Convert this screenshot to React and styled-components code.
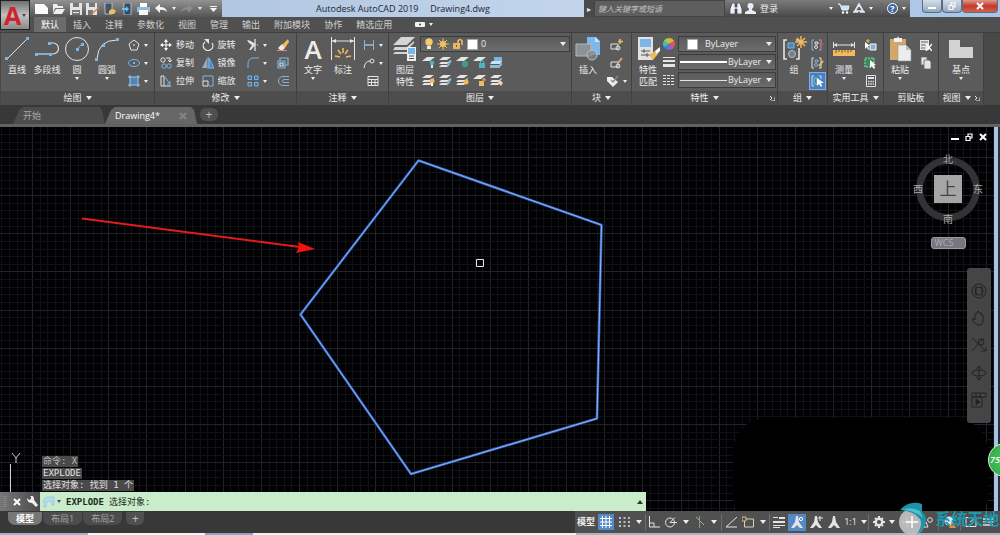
import React from "react";
import styled, { createGlobalStyle, css } from "styled-components";

const ui = `"Open Sans", "Noto Sans CJK SC", sans-serif`;
const mono = `"DejaVu Sans Mono", "Noto Sans CJK SC", monospace`;

const GlobalStyle = createGlobalStyle`
	* {
		box-sizing: border-box;
	}
	body {
		margin: 0;
		background: #2b2b2b;
		font: 9px/12px ${ui};
		color: #ececec;
		overflow: hidden;
	}
	button, input, select {
		font: inherit;
		color: inherit;
		margin: 0;
		padding: 0;
		border: 0;
		background: none;
	}
	svg {
		display: block;
		flex: none;
	}
`;

const W = "#e4e4e4";
const B = "#7db6e4";
const Y = "#f2b95f";
const T = "#4fb3bd";

const sheets = (
	<g fill={W}>
		<path d="M4 1h8l-4 3H0z" />
		<path d="M2 6h7l3-2v1L8 8H0zM2 9h6l3-2v1l-3 3H0z" />
	</g>
);
const sheet = <path d="M5 1h8L8 5H0z" fill={W} />;
const surveyor = (
	<path d="M6 0h2l1 6 4 6h-3L7 9l-3 3H1l4-6z" fill={W} />
);

// [width, height, drawing]
const glyphs = {
	caret: [6, 4, <path d="M0 0h6L3 4z" fill="#eee" />],
	smallCaret: [4, 3, <path d="M0 0h4L2 3z" fill="#eee" />],
	launcher: [5, 5, <path d="M0 0l2 2-2 2M5 1v4H1" fill="none" stroke={W} />],
	new: [13, 12, <path d="M0 1h9l4 4v6H0z" fill="#fafafa" />],
	open: [13, 12, <g fill="#eee"><path d="M1 1h4l1 2h5v2H3L1 10z" /><path d="M4 6h9l-3 5H1z" /></g>],
	save: [12, 12, <g><path d="M0 0h12v12H0z" fill="#e4e4e4" /><path d="M3 0h6v4H3zM2 7h8v5H2z" fill="#777" /><path d="M3 9h6v1H3z" fill="#eee" /></g>],
	saveAs: [13, 12, <g><path d="M0 0h11v12H0z" fill="#e4e4e4" /><path d="M3 0h6v4H3zM2 7h5v5H2z" fill="#777" /><path d="M12 4L6 10l-1 2 2-1 6-6z" fill="#d98a45" /></g>],
	openWeb: [12, 12, <g><path d="M1 0h7v11H1z" fill="#41546a" stroke="#eee" strokeWidth=".6" /><path d="M5 8q3-4 7 0l-2 3H5z" fill={Y} /></g>],
	saveWeb: [12, 12, <g><path d="M3 0h7v12H3z" fill="#2f4d6b" stroke="#eee" strokeWidth=".6" /><path d="M1 5h4V3l3 3-3 3V7H1z" fill="#6cc3ee" /></g>],
	print: [13, 12, <g><path d="M3 0h7v4H3z" fill="#fff" /><path d="M0 4h13v5H0z" fill="#8fbbe0" /><path d="M2 7h9v5H2z" fill="#f5f5f5" /></g>],
	undo: [12, 9, <path d="M0 4l5-4v3q6 0 7 5-3-3-7-2v3z" fill="#f5f5f5" />],
	redo: [12, 9, <path d="M12 4L7 0v3Q1 3 0 8q3-3 7-2v3z" fill="#8b8b8b" />],
	more: [7, 6, <path d="M0 0h7v1H0zM0 2h7L3.500 6z" fill="#f5f5f5" />],
	binoculars: [12, 11, <g fill="#eef"><path d="M2 0h3v4h2V0h3l2 6v5H7V6H5v5H0V6z" stroke="#333" strokeWidth=".7" /></g>],
	user: [11, 11, <g fill="#e8eef5"><circle cx="5.500" cy="3" r="3" /><path d="M4 5h3v2l4 2v2H0V9l4-2z" /></g>],
	cart: [12, 11, <g><path d="M0 1h2l2 6h6l1-4H3" fill="#cfe0f2" stroke="#e8eef5" /><circle cx="5" cy="9.500" r="1.200" fill="#fff" /><circle cx="9" cy="9.500" r="1.200" fill="#fff" /></g>],
	exchange: [12, 11, <path d="M6 1L2 8h8zM0 9h5M7 9h5M6 1v3" fill="none" stroke="#dfe9f5" strokeWidth="1.600" />],
	help: [11, 11, <g><circle cx="5.500" cy="5.500" r="5" fill="#3d67a5" stroke="#fff" /><text x="5.500" y="9" fontSize="9" fontWeight="700" textAnchor="middle" fill="#fff">?</text></g>],
	camera: [11, 7, <g><rect y="1" width="10" height="5" rx="1" fill="#f2f2f2" /><circle cx="5" cy="3.500" r="1" fill="#444" /></g>],

	line: [26, 26, <g><path d="M3 23L23 3" stroke={W} /><path d="M1 21h3v3H1zM22 1h3v3h-3z" fill={B} /></g>],
	polyline: [26, 26, <g fill="none"><path d="M2 18h17a5 5 0 0 0 0-11h-2" stroke={W} strokeWidth="1.200" /><path d="M2 18h14" stroke={B} /><path d="M1 17h3v3H1zM15 17h3v3h-3zM14 6h3v3h-3z" fill={B} /></g>],
	circle: [26, 26, <g><circle cx="13" cy="13" r="11.500" fill="none" stroke={W} /><path d="M13 13l5-5" stroke={B} /><path d="M12 12h3v3h-3zM17 7h3v3h-3z" fill={B} /></g>],
	arc: [26, 26, <g><path d="M3 23Q4 4 23 4" fill="none" stroke={W} /><path d="M1 22h3v3H1zM8 8h3v3H8zM22 2h3v3h-3z" fill={B} /></g>],
	polygon: [12, 12, <g fill="none" stroke={W}><path d="M6 1l5 4-2 6H3L1 5z" /><path d="M6 5v2" stroke={B} strokeWidth="2" /></g>],
	ellipse: [12, 12, <g fill="none" stroke={B}><ellipse cx="6" cy="6" rx="5.500" ry="3.500" /><path d="M5 6h2" strokeWidth="2" /></g>],
	hatch: [12, 12, <g><path d="M2 2h8v8H2z" fill="#4c86ba" /><path d="M2 0v12M10 0v12M0 2h12M0 10h12" stroke="#9fc9ea" /></g>],
	move: [12, 12, <g><path d="M6 2v8M2 6h8" stroke="#fff" /><path d="M6 0l2 3H4zM6 12l2-3H4zM0 6l3-2v4zM12 6L9 4v4z" fill="#fff" /></g>],
	rotate: [12, 12, <g><path d="M3 3a4.800 4.800 0 1 0 7 1" fill="none" stroke={W} strokeWidth="1.300" /><path d="M2 0h5v5z" fill={W} /></g>],
	trim: [12, 12, <g><path d="M1 2l7 3M8 0v12" stroke={W} strokeWidth="1.300" /><path d="M0 1l4 1 4 4-4 5H2l3-5-3-2z" fill={W} /><path d="M8 6h4" stroke={W} strokeDasharray="1 1" /></g>],
	erase: [13, 12, <g><path d="M12 0L6 6l3 3 4-6z" fill={Y} /><path d="M6 5L2 9l2 2h3l2-2z" fill="#f3e6dd" /><path d="M1 11.500h10" stroke="#d88" /></g>],
	copy: [12, 12, <g fill="none" stroke={W}><circle cx="3" cy="3" r="2.200" /><path d="M6 1h4v3M8 3l2 2 2-2" stroke={W} /><circle cx="4" cy="9" r="2.200" stroke={B} /><circle cx="9" cy="9" r="2.200" stroke={B} /></g>],
	mirror: [12, 12, <g><path d="M5 1v10H0z" fill="#9ab" /><path d="M7 1v10h5z" fill="#4c86ba" stroke={B} /><path d="M6 0v12" stroke={B} /></g>],
	fillet: [12, 12, <path d="M1 11V7q0-6 6-6h5" fill="none" stroke={B} />],
	explode: [12, 12, <g fill="none" stroke={B} strokeWidth="1.200"><path d="M1 4h7v7H1zM3 4V1h8v7H8" /><path d="M3 6h3v3H3z" stroke={W} /></g>],
	stretch: [12, 12, <g fill="none" stroke={W}><path d="M4 1H1v10h10M4 1v10" /><path d="M5 2l5 7V6M10 9H7" stroke={B} /></g>],
	scale: [12, 12, <g fill="none"><path d="M1 1h10v10H7M1 1v5" stroke={B} /><path d="M1 6h5v5H1z" stroke={W} /></g>],
	array: [12, 12, <g fill="#3b6f9e" stroke={B}><path d="M1 1h3.500v3.500H1zM7.500 1H11v3.500H7.500zM1 7.500h3.500V11H1zM7.500 7.500H11V11H7.500z" /></g>],
	offset: [12, 12, <g fill="none" stroke={B}><path d="M12 1.500H6a4.500 4.500 0 0 0 0 9h6" /><path d="M12 4.500H7a1.500 1.500 0 0 0 0 3h5" stroke="#9ab" /></g>],

	dimension: [26, 26, <g><path d="M1.500 1v23M24.500 1v23M2 5h22" stroke={W} fill="none" /><path d="M2 5l4-2v4zM24 5l-4-2v4z" fill={W} /><path d="M13 12v5M8 14l3 4M18 14l-3 4M5 20l5 1M21 20l-5 1" stroke={Y} strokeWidth="1.600" /></g>],
	dimLinear: [12, 12, <g stroke={B}><path d="M1.500 1v10M10.500 1v10" /><path d="M2 6h8" stroke={W} /></g>],
	leader: [12, 12, <g fill="none" stroke={W}><path d="M1 11q1-7 6-7" /><circle cx="9" cy="4" r="2" /></g>],
	table: [12, 12, <g fill="none" stroke={W}><path d="M1 1.500h10v9H1zM1 4.500h10M1 7.500h10M4.500 4v7M8 4v7" /></g>],

	layerProps: [26, 26, <g><path d="M9 1h14l-8 8H1zM3 11h12l7-6v2l-7 7H1zM3 16h12l2-1v3H1z" fill="#d5d5d5" /><path d="M15 11h9v14h-9z" fill="#eee" /><path d="M16 12h7v6h-7z" fill={B} /><path d="M17 20h5M17 22.500h5" stroke="#555" /></g>],
	bulb: [10, 12, <g><circle cx="5" cy="4" r="3.700" fill="#f7ca6c" /><path d="M3 8h4v3H3z" fill="#f3ead8" /></g>],
	sun: [12, 12, <g><circle cx="6" cy="6" r="3" fill="#f7c664" /><path d="M6 0v12M0 6h12M2 2l8 8M10 2l-8 8" stroke={Y} /></g>],
	unlock: [12, 12, <g><path d="M1 5h7v6H1z" fill="#e8b767" /><path d="M6 5V3q2-3 4 0v4" fill="none" stroke={Y} strokeWidth="1.600" /><path d="M4 7h1v2H4z" fill="#654" /></g>],
	swatch: [11, 11, <path d="M.5.5h10v10H.5z" fill="#fff" stroke="#aaa" />],
	layOff: [13, 12, <g>{sheet}<circle cx="10" cy="7" r="2.300" fill={T} /><path d="M9 9h2v3H9z" fill="#d5eef0" /></g>],
	layIso: [13, 12, <g>{sheets}<path d="M12 5l-4 6" stroke={B} strokeWidth="1.400" /></g>],
	layFreeze: [13, 12, <g>{sheet}<circle cx="9" cy="8" r="3.300" fill="#3f9b8c" /></g>],
	layLock: [13, 12, <g>{sheet}<path d="M6 7h6v5H6z" fill={T} /><path d="M7.500 7V5h3v2" fill="none" stroke={T} /></g>],
	layCurrent: [13, 12, <g><path d="M4 1h8v5H4z" fill="#79b4e6" /><path d="M2 5h10l-2 3H0z" fill="#cfe0ef" /><path d="M0 9h9l3-3v3l-3 3H0z" fill="#8fb9dd" /></g>],
	layOn: [13, 12, <g>{sheets}<circle cx="10" cy="7" r="2.500" fill={Y} /><path d="M9 9h2v3H9z" fill="#fff" /></g>],
	layThaw: [13, 12, <g>{sheets}<circle cx="10" cy="8" r="2.500" fill={Y} /></g>],
	layUnlock: [13, 12, <g>{sheet}<path d="M6 7h5v5H6z" fill={Y} /><path d="M10 7V5h2v2" fill="none" stroke={Y} /></g>],
	layMatch: [13, 12, <g>{sheets}<path d="M7 7l3-1 3 3-2 3z" fill="#e9d6b0" /></g>],

	insert: [26, 26, <g><path d="M12 1h9l4 4v14H12z" fill="#7db8ea" /><path d="M20 1v5h5z" fill="#c9e3f8" /><path d="M1 8h15v12H1z" fill="#8d9296" stroke="#b5b8ba" /><circle cx="17" cy="19" r="5" fill="#85898c" fillOpacity=".7" stroke="#bfc3c6" /></g>],
	blockNew: [13, 12, <g fill="none" stroke={W}><path d="M1 5h7v5H1z" /><circle cx="8" cy="9" r="2" /><path d="M10 0v5M8 2.500h5" stroke={Y} strokeWidth="1.600" /></g>],
	blockEdit: [13, 12, <g fill="none" stroke={W}><path d="M1 5h7v5H1z" /><circle cx="8" cy="9" r="2" /><path d="M12 1L8 6" stroke="#e7a06b" strokeWidth="2" /></g>],
	attribute: [13, 12, <g><path d="M1 2h5l6 5-5 5-6-6z" fill="#eee" /><path d="M12 1L7 7l-2-2" fill="none" stroke="#888" strokeWidth="1.300" /></g>],

	matchProps: [26, 26, <g><path d="M3 1h15v23H3z" fill="#e2e2e2" /><path d="M5 3h11v8H5z" fill={B} /><path d="M6 15h9M6 19h9M9 13v4M12 17v4" stroke="#555" /><path d="M14 19l6-4 3 3-5 6z" fill={Y} /><path d="M20 15l5-4v4l-3 3z" fill="#fff" /></g>],
	wheel: [12, 12, <g><path d="M6 6V0a6 6 0 0 1 5.200 3z" fill="#f4a73c" /><path d="M6 6l5.200-3a6 6 0 0 1 0 6z" fill="#e4574f" /><path d="M6 6l5.200 3A6 6 0 0 1 6 12z" fill="#a45bc4" /><path d="M6 6v6A6 6 0 0 1 .8 9z" fill="#3e83e0" /><path d="M6 6L.8 9a6 6 0 0 1 0-6z" fill="#42c0b5" /><path d="M6 6L.8 3A6 6 0 0 1 6 0z" fill="#9ad04c" /></g>],
	weights: [12, 12, <path d="M0 1h12v1H0zM0 4h12v2H0zM0 8h12v3H0z" fill={W} />],
	dashes: [12, 12, <path d="M0 1.500h12M0 4.500h12M0 7.500h12M0 10.500h12" stroke={W} strokeDasharray="3 1" />],
	thickRule: [47, 3, <path d="M0 1h47" stroke="#fff" strokeWidth="2" />],
	thinRule: [47, 3, <path d="M0 1.500h47" stroke={W} />],

	group: [26, 26, <g fill="none"><path d="M6 4H3v19h3M15 4h3M15 23h3V12" stroke={W} strokeWidth="1.600" /><path d="M7 7h6v5H7z" fill="#4d83b0" stroke={B} /><circle cx="11" cy="18" r="3.500" stroke="#b8c4cf" fill="#71818f" /><path d="M20 0v12M14 6h12M16 2l8 8M24 2l-8 8" stroke={Y} strokeWidth="1.500" /></g>],
	ungroup: [13, 12, <g fill="none"><path d="M3 1H1v10h2M8 1h2v10H8" stroke={B} /><path d="M4 3h3v2H4z" stroke={W} /><circle cx="5" cy="8" r="1.500" stroke={W} /><path d="M10 0v12M8 5h5" stroke="#c65a5a" /></g>],
	groupEdit: [13, 12, <g fill="none"><path d="M3 1H1v10h2M8 1h2v10H8" stroke={W} /><path d="M4 3h3v2H4z" stroke={B} /><circle cx="5" cy="8" r="1.500" stroke={B} /><path d="M12 4L8 9" stroke={Y} strokeWidth="2" /></g>],
	groupSelect: [13, 12, <g fill="none"><path d="M3 1H1v10h2M8 1h2v3" stroke="#bfe0f5" /><path d="M3 3h3v6H3z" stroke="#6cc79b" /><path d="M6 3v8l2-2 2 3 1-1-1-3h3z" fill="#fff" /></g>],
	measure: [26, 26, <g><path d="M2 9h22M2.500 6v6M23.500 6v6" stroke={W} fill="none" /><path d="M3 9l3-2v4zM23 9l-3-2v4z" fill={W} /><path d="M2 14h22v6H2z" fill={Y} /><path d="M5 14v3M8 14v2M11 14v3M14 14v2M17 14v3M20 14v2" stroke="#7a5a20" /></g>],
	quickSelect: [13, 12, <g><path d="M6 5h6v6H6z" fill="#7fb0d8" stroke="#fff" /><path d="M1 3v7l2-2 1 3 1-1-1-3h2z" fill="#fff" /><path d="M4 0v4M2 2h4" stroke={Y} /></g>],
	selectAll: [13, 12, <g><path d="M1 1h9v9H1z" fill="#2f8f5b" stroke="#a8d8bb" strokeDasharray="2 1" /><path d="M6 3v8l2-2 2 3 1-1-1-3h2z" fill="#fff" /></g>],
	calculator: [10, 12, <g><path d="M.5.5h9v11h-9z" fill="#555" stroke={W} /><path d="M2 2h6v2H2z" fill={W} /><path d="M2 6.500h6M2 9h6" stroke={W} strokeDasharray="1.500 .8" strokeWidth="1.500" /></g>],
	paste: [26, 26, <g><path d="M3 3h16v21H3z" fill="#d3a66c" /><path d="M7 2h3q1-3 2 0h3v4H7z" fill="#f0f0f0" /><path d="M11 9h8l5 5v11H11z" fill="#ececec" stroke="#999" strokeWidth=".6" /><path d="M19 9v5h5z" fill="#bdbdbd" /></g>],
	cut: [12, 12, <g><path d="M0 1h9v10H0z" fill={W} /><path d="M1 3h7M1 6h5M1 9h4" stroke="#666" /><path d="M6 5l6 7M12 5l-6 7" stroke="#fff" strokeWidth="1.300" /></g>],
	copyClip: [12, 12, <g fill={W} stroke="#666" strokeWidth=".8"><path d="M1 0h6v8H1z" /><path d="M4 3h5l2 2v7H4z" /></g>],
	base: [26, 26, <path d="M1 4h11v7h13v11H1z" fill="#d2d2d2" />],

	modelGrid: [12, 12, <path d="M0 2.500h12M0 6h12M0 9.500h12M2.500 0v12M6 0v12M9.500 0v12" stroke="#fff" />],
	snap: [12, 12, <path d="M1 2h11M1 6h11M1 10h11" stroke={W} strokeWidth="1.600" strokeDasharray="2 2.500" />],
	ortho: [12, 12, <path d="M1.500 0v11H12M2 7h4v4" fill="none" stroke={W} />],
	polar: [12, 12, <g fill="none" stroke={W}><circle cx="5" cy="6.500" r="4.500" /><path d="M5 6.500h7M5 6.500l5-5" /></g>],
	iso: [12, 12, <g fill="none"><path d="M2 1l8 8" stroke="#aaa" /><path d="M5.500 0v12" stroke="#79a86f" /></g>],
	track: [12, 12, <path d="M12 1L1 11h11" fill="none" stroke={W} />],
	osnap: [12, 12, <g fill="none"><path d="M2.500 3h9v8h-9z" stroke="#d8cfb4" /><path d="M0 1h4v4H0z" stroke="#d9c27a" fill="#4f4f4f" /></g>],
	lineWeight: [12, 12, <path d="M0 1h5v1H0zM6 1h6v2H6zM0 5h12v2H0zM0 9h12v1H0zM0 11h7v1H0z" fill={W} />],
	annoVisible: [14, 13, <g>{surveyor}<circle cx="11" cy="3" r="1.600" fill="none" stroke="#fff" /></g>],
	annoAuto: [14, 13, <g>{surveyor}<path d="M11 0v5M9 2h5" stroke={W} /></g>],
	anno: [14, 13, surveyor],
	gear: [12, 12, <g><circle cx="6" cy="6" r="3.300" fill="none" stroke={W} strokeWidth="2.400" /><path d="M6 0v2M6 10v2M0 6h2M10 6h2M2 2l1 1M9 9l1 1M10 2L9 3M3 9l-1 1" stroke={W} strokeWidth="2" /></g>],
	plus: [12, 12, <path d="M6 1v10M1 6h10" stroke="#eee" strokeWidth="1.300" />],
	isolate: [12, 12, <g fill="none" stroke={W}><circle cx="8" cy="4" r="2.300" /><path d="M1 11l3-5 2 5z" /></g>],
	hardware: [12, 12, <g><circle cx="5" cy="5" r="4.500" fill="#d5e7f5" /><path d="M8 5l4 7H5z" fill="#e88a3c" /></g>],
	clean: [12, 12, <path d="M1 1.500h10v9H1zM5 6l5-4M7 2h3v3" fill="none" stroke={W} />],
	menu: [12, 12, <path d="M1 3h10M1 6h10M1 9h10" stroke={W} strokeWidth="1.600" />],

	close: [8, 8, <path d="M1 1l6 6M7 1L1 7" stroke="#fff" strokeWidth="2" />],
	minimize: [8, 8, <path d="M0 5h8v2H0z" fill="#fff" />],
	restore: [8, 8, <path d="M1 3.500h4v4H1zM3 3V1h4v4H5" fill="none" stroke="#fff" strokeWidth="1.200" />],
	wrench: [11, 11, <path d="M0 2l2 2 2-1V1L3 0q4-1 4 3v1l4 5-2 2-4-4Q0 7 0 2z" fill="#f0f0f0" />],
	prompt: [12, 12, <g fill="#b5dff0" stroke="#9bc6dc"><path d="M1 11V6q0-5 5-5h5v8h-2V5H5q-2 0-2 6z" /></g>],
	up: [6, 4, <path d="M0 4h6L3 0z" fill="#2c3c2c" />],
	grip: [4, 12, <path d="M1 0v12M3 0v12" stroke="#999" strokeDasharray="1 1" />],
	steering: [16, 16, <g fill="none" stroke="#222"><circle cx="8" cy="8" r="7" /><circle cx="8" cy="8" r="4" /><path d="M5 3v10M11 3v10" /></g>],
	pan: [16, 16, <path d="M4 9V4q1-2 2 0V2q1-2 2 0v1q1-2 2 0v2q2-1 2 0v6q-1 5-5 4-3 0-6-6 1-2 3 1z" fill="none" stroke="#222" />],
	zoomAll: [16, 16, <g fill="none" stroke="#222"><path d="M1 1l13 12M13 1L1 14M10 14h5v-4" /><circle cx="10" cy="5" r="3" /></g>],
	orbit: [16, 16, <g fill="none" stroke="#222"><ellipse cx="8" cy="8" rx="7" ry="3" /><path d="M8 1v14M5 4l3-3 3 3M5 12l3 3 3-3" /></g>],
	motion: [16, 16, <g fill="none" stroke="#222"><path d="M1 1h14v4H1zM1 5h10v10H1zM5 1v4M9 1v4" /><path d="M5 7l4 3-4 3z" fill="#222" /></g>]
};

const Glyph = ({ name, ...rest }) => {
	const [width, height, drawing] = glyphs[name];
	return (
		<svg width={width} height={height} viewBox={`0 0 ${width} ${height}`} aria-hidden="true" {...rest}>
			{drawing}
		</svg>
	);
};

const DarkGlyph = styled(Glyph)`
	filter: brightness(0.3);
`;

const Window = styled.div`
	display: flex;
	flex-direction: column;
	height: 100vh;
	overflow: hidden;
`;

const Header = styled.header`
	display: grid;
	grid-template: 17px 15px / 30px 1fr;
	background: #505050;
`;

const AppButton = styled.button`
	grid-row: 1 / 3;
	display: flex;
	align-items: center;
	justify-content: center;
	gap: 1px;
	height: 30px;
	border: 1px solid #222;
	background: linear-gradient(#6f6f6f, #c0c0c0 50%, #8a8a8a);
`;

const Logo = styled.span`
	color: #d0242c;
	font-size: 25px;
	font-weight: 700;
	line-height: 28px;
`;

const TitleBar = styled.div`
	display: flex;
	background: linear-gradient(90deg, #a9bfda, #c3d6ec 60%, #a6c4e4);
`;

const QuickAccess = styled.div`
	display: flex;
	align-items: center;
	width: 192px;
	padding-left: 3px;
	background: linear-gradient(#929292, #555);
`;

const QuickButton = styled.button`
	display: flex;
	justify-content: center;
	width: ${({ $narrow }) => ($narrow ? "10px" : "18px")};
`;

const Title = styled.h1`
	flex: 1;
	margin: 0;
	font-size: 9px;
	font-weight: 400;
	line-height: 17px;
	text-align: center;
	white-space: pre;
	color: #1d2530;
`;

const Expand = styled.button`
	display: flex;
	align-items: center;
	justify-content: center;
	width: 10px;
	background: #4a4a4a;
	font-size: 8px;
`;

const Search = styled.input`
	width: 131px;
	padding: 0 3px;
	border: 1px solid #444;
	background: #5e5e5e;
	font-size: 8px;
	font-style: italic;

	&::placeholder {
		color: #c0c0c0;
	}
`;

const Account = styled.div`
	display: flex;
	align-items: center;
	width: 185px;
	padding: 0 4px 0 2px;
	background: linear-gradient(#7c7c7c, #484848);
`;

const AccountButton = styled.button`
	display: flex;
	align-items: center;
	justify-content: center;
	gap: 4px;
	min-width: ${({ $narrow }) => ($narrow ? "8px" : "18px")};
	white-space: nowrap;
`;

const Spacer = styled.div`
	flex: 1;
`;

const HelpArea = styled.div`
	display: flex;
	margin-left: 8px;
	padding-left: 5px;
	border-left: 1px solid #666;
`;

const WindowButtons = styled.div`
	display: flex;
	align-items: flex-start;
	padding: 0 2px 0 12px;
`;

const WindowButton = styled.button`
	display: flex;
	align-items: center;
	justify-content: center;
	width: ${({ $close }) => ($close ? "36px" : "20px")};
	height: 13px;
	border: 1px solid #5d6c80;
	border-top: 0;
	border-radius: 0 0 4px 4px;
	background: ${({ $close }) =>
		$close ? "linear-gradient(#e09a8c, #c4392a 50%, #d4604c)" : "linear-gradient(#d5dfea, #93a7bf)"};
`;

const RibbonTabs = styled.nav`
	display: flex;
	padding-left: 4px;
`;

const RibbonTab = styled.button`
	padding: 0 7px;
	line-height: 15px;
	color: #d0d0d0;
	${({ $active }) =>
		$active &&
		css`
			background: #6b6b6b;
			color: #fff;
		`}
`;

const CameraButton = styled.button`
	display: flex;
	align-items: center;
	gap: 3px;
	margin-left: 16px;
`;

const Ribbon = styled.div`
	display: flex;
	height: 73px;
	padding-left: 1px;
	border-top: 1px solid #3e3e3e;
	background: #484848;
`;

const Panel = styled.section`
	display: flex;
	flex-direction: column;
	flex: none;
	width: ${({ $width }) => $width}px;
	border-right: 1px solid #404040;
	background: #5b5b5b;
`;

const PanelBody = styled.div`
	display: flex;
	flex: 1;
	padding: 3px 1px 0;
`;

const PanelLabel = styled.h2`
	position: relative;
	display: flex;
	align-items: center;
	justify-content: center;
	gap: 4px;
	height: 14px;
	margin: 0;
	padding: 0 2px;
	background: #4d4d4d;
	font-size: 9px;
	font-weight: 400;
	white-space: nowrap;
`;

const Launcher = styled.button`
	display: flex;
	${({ $far }) =>
		$far &&
		css`
			position: absolute;
			right: 2px;
		`}
`;

const BigButton = styled.button`
	display: flex;
	flex-direction: column;
	align-items: center;
	flex: none;
	width: 30px;
	height: 54px;
	white-space: nowrap;
`;

const BigLabel = styled.span`
	max-width: ${({ $wrap }) => ($wrap ? "18px" : "none")};
	margin: 2px 0 1px;
	white-space: ${({ $wrap }) => ($wrap ? "normal" : "nowrap")};
`;

const Letter = styled.span`
	height: 26px;
	font-size: 26px;
	font-weight: 600;
	line-height: 26px;
`;

const Tools = styled.div`
	display: grid;
	grid-template-columns: repeat(${({ $cols }) => $cols || 1}, auto);
	grid-auto-rows: 18px;
	align-content: start;
	flex: 1;
	padding-left: ${({ $inset }) => ($inset ? "4px" : "0")};
`;

const Tool = styled.button`
	display: flex;
	align-items: center;
	justify-content: ${({ $start }) => ($start ? "flex-start" : "center")};
	gap: 4px;
	min-width: 17px;
	white-space: nowrap;
	${({ $active }) =>
		$active &&
		css`
			background: #4a7fc0;
			outline: 1px solid #7fb0e8;
			outline-offset: -1px;
		`}
`;

const Stack = styled.div`
	flex: 1;
	min-width: 0;
	display: flex;
	flex-direction: column;
	gap: ${({ $gap }) => $gap || 0}px;
`;

const LayerTools = styled.div`
	display: grid;
	grid-template-columns: repeat(5, 17px);
	grid-auto-rows: 18px;
`;

const Combo = styled.label`
	display: flex;
	align-items: center;
	gap: ${({ $tight }) => ($tight ? 1 : 3)}px;
	height: 16px;
	padding: 0 3px 0 ${({ $tight }) => ($tight ? 1 : 3)}px;
	border: 1px solid #3c3c3c;
	background: linear-gradient(#5a5a5a, #6c6c6c);

	select {
		flex: 1;
		min-width: 0;
		height: 14px;
		appearance: none;
		outline: 0;
	}
`;

const ColorCombo = styled(Combo)`
	gap: 7px;
	padding-left: 8px;
`;

const PropertyRow = styled.div`
	display: grid;
	grid-template-columns: 14px minmax(0, 1fr);
	align-items: center;
	gap: 1px;
`;

const FileTabs = styled.nav`
	display: flex;
	align-items: flex-end;
	height: 22px;
	padding-left: 13px;
	border-bottom: 3px solid #626262;
	background: #383838;
`;

const FileTab = styled.button`
	display: flex;
	align-items: center;
	justify-content: space-between;
	width: 92px;
	height: 17px;
	padding: 0 10px;
	clip-path: polygon(0 100%, 6px 3px, 10px 0, 86px 0, 89px 3px, 100% 100%);
	background: ${({ $active }) => ($active ? "#666" : "#4c4c4c")};
	color: ${({ $active }) => ($active ? "#fff" : "#a8a8a8")};
`;

const AddTab = styled.button`
	display: flex;
	align-items: center;
	justify-content: center;
	align-self: ${({ $top }) => ($top ? "flex-start" : "center")};
	width: 18px;
	height: 13px;
	margin-left: 3px;
	border-radius: ${({ $top }) => ($top ? "0 0 6px 6px" : "6px")};
	background: #505050;
	color: #bdbdbd;
	font-size: 12px;
`;

const Workspace = styled.main`
	position: relative;
	display: flex;
	flex: 1;
	min-height: 0;
`;

const Canvas = styled.div`
	position: relative;
	flex: 1;
	overflow: hidden;
	background: #010104;
`;

const Drawing = styled.svg`
	position: absolute;
	inset: 0;
`;

const FrameEdge = styled.div`
	width: 6px;
	border-right: 2px solid #26303a;
	background: #a8c4e0;
`;

const ViewTools = styled.div`
	position: absolute;
	top: 6px;
	right: 7px;
	display: flex;
	flex-direction: column;
	align-items: center;
	width: 78px;
`;

const DocButtons = styled.div`
	display: flex;
	align-self: flex-end;
	gap: 6px;
	height: 21px;

	button {
		height: 8px;
	}
`;

const Compass = styled.div`
	position: relative;
	display: grid;
	grid-template: 10px 50px 10px / 10px 50px 10px;
	place-items: center;
	color: #aaa;

	&::before {
		content: "";
		position: absolute;
		inset: 3px;
		border: 7px solid #333335;
		border-radius: 50%;
	}
`;

const Side = styled.span`
	position: relative;
	grid-area: ${({ $area }) => $area};
	font-size: 10px;
`;

const Cube = styled.button`
	grid-area: 2 / 2;
	width: 28px;
	height: 28px;
	background: #a5a5a5;
	color: #444;
	font-size: 17px;
	line-height: 24px;
`;

const Wcs = styled.button`
	display: flex;
	align-items: center;
	width: 35px;
	height: 12px;
	margin-top: 13px;
	padding: 0 3px;
	border: 1px solid #9a9aa2;
	border-radius: 3px;
	background: #77777f;
	color: #aeaeb6;
`;

const NavBar = styled.div`
	position: absolute;
	top: 141px;
	right: 3px;
	display: flex;
	flex-direction: column;
	align-items: center;
	justify-content: space-evenly;
	width: 24px;
	height: 155px;
	padding: 4px 0;
	border-radius: 3px;
	background: #454545;
`;

const Console = styled.div`
	position: absolute;
	left: 0;
	bottom: 0;
	width: 65%;
	font-family: ${mono};
`;

const History = styled.div`
	display: flex;
	flex-direction: column;
	align-items: flex-start;
	gap: 1px;
	padding: 0 0 1px 42px;
	line-height: 11px;
`;

const Entry = styled.span`
	padding: 0 1px;
	background: #4a4a4a;
	color: ${({ $dim }) => ($dim ? "#b8b8b8" : "#e2e2e2")};
`;

const CommandLine = styled.div`
	display: flex;
	align-items: center;
	height: 19px;
	background: #c9edcb;
	color: #1c2a1c;
`;

const CommandTools = styled.div`
	display: flex;
	align-items: center;
	gap: 6px;
	width: 40px;
	height: 19px;
	padding-left: 3px;
	background: linear-gradient(90deg, #777, #4b4b4b);
`;

const Prompt = styled.label`
	display: flex;
	align-items: center;
	gap: 2px;
	padding: 0 5px 0 3px;
	white-space: nowrap;

	b {
		margin: 0 3px;
	}
`;

const CommandInput = styled.input`
	flex: 1;
	min-width: 0;
	outline: 0;
`;

const HistoryButton = styled.button`
	display: flex;
	padding: 0 3px;
`;

const Footer = styled.footer`
	display: flex;
	justify-content: space-between;
	height: 22px;
	background: #383838;
`;

const LayoutTabs = styled.nav`
	display: flex;
	align-items: flex-start;
	gap: 1px;
	padding: 1px 0 0 8px;
`;

const LayoutTab = styled.button`
	height: 13px;
	padding: 0 8px;
	border-radius: 0 0 7px 7px;
	background: ${({ $active }) => ($active ? "#777" : "#4c4c4c")};
	color: ${({ $active }) => ($active ? "#fff" : "#a5a5a5")};
	font-weight: ${({ $active }) => ($active ? "700" : "400")};
	line-height: 13px;
`;

const StatusBar = styled.div`
	display: flex;
	align-items: center;
	padding: 1px 4px 1px 0;
	background: #505050;
`;

const StatusButton = styled.button`
	display: flex;
	align-items: center;
	justify-content: center;
	width: ${({ $width }) => $width || 18}px;
	height: 17px;
	font-weight: ${({ $bold }) => ($bold ? "700" : "400")};
	border-left: ${({ $split }) => ($split ? "1px solid #6e6e6e" : "0")};

	svg {
		box-shadow: ${({ $active }) => ($active ? "0 0 0 2px #5488c7" : "none")};
		background: ${({ $active }) => ($active ? "#5488c7" : "none")};
	}
`;

const Taskbar = styled.div`
	height: 2px;
	background: linear-gradient(90deg, #9fb4cb 88px, #f2f5f8 88px 205px, #8da5bd 205px 253px, #eef2f6 253px 576px, #a6b6c6 576px);
`;

const Badge = styled.div`
	position: absolute;
	top: 316px;
	right: -22px;
	width: 34px;
	height: 34px;
	padding-left: 1px;
	border: 1px solid #d7efd9;
	border-radius: 50%;
	background: radial-gradient(#49c95b, #2fa443);
	color: #fff;
	font-style: italic;
	font-weight: 600;
	line-height: 32px;
`;

const Watermark = styled.div`
	position: fixed;
	right: 1px;
	bottom: 0;
	display: flex;
	align-items: center;
	gap: 4px;
	color: #199bb2;
	font-size: 16px;
	font-weight: 700;
	line-height: 32px;
	pointer-events: none;
`;

// major grid line every 38.15px, split in five
const gridLines = (start, end) => {
	const lines = [];
	for (let i = -30; start + i * 7.63 < end; i++) {
		lines.push({ at: Math.round(start + i * 7.63) + 0.5, major: i % 5 === 0 });
	}
	return lines.filter(({ at }) => at > 0);
};

const ModelSpace = () => (
	<Drawing width="100%" height="100%" aria-label="Drawing4">
		{gridLines(32, 2000).map(({ at, major }) => (
			<path key={at} d={`M${at} 0v2000`} stroke={major ? "#222329" : "#101115"} />
		))}
		{gridLines(30, 2000).map(({ at, major }) => (
			<path key={at} d={`M0 ${at}h2000`} stroke={major ? "#222329" : "#101115"} />
		))}
		<rect x="733" y="291" width="255" height="110" rx="34" fill="#000" />
		<g fill="none" strokeLinejoin="round">
			<path d="M418.500 33.500L601.500 98 597 291.500 411 347 300.500 187.500z" stroke="#3566c4" strokeWidth="2.600" />
			<path d="M418.500 33.500L601.500 98 597 291.500 411 347 300.500 187.500z" stroke="#8db4f2" strokeWidth="1" />
			<path d="M476.500 132.500h7v7h-7z" stroke="#e8e8e8" />
			<path d="M10.500 337v40M12 326l4 5 4-5M16 331v5" stroke="#ccc" />
		</g>
		<path d="M82 91.500L300 120" stroke="#e31b1b" strokeWidth="2" />
		<path d="M298 115l17 7-19 4 3-6z" fill="#f5120c" />
	</Drawing>
);

const quickTools = ["new", "open", "save", "saveAs", "openWeb", "saveWeb", "print", "undo", "smallCaret", "redo", "smallCaret", "more"];

const tabs = ["默认", "插入", "注释", "参数化", "视图", "管理", "输出", "附加模块", "协作", "精选应用"];

const Big = ({ icon, letter, label, caret, wrap }) => (
	<BigButton>
		{letter ? <Letter>{letter}</Letter> : <Glyph name={icon} />}
		<BigLabel $wrap={wrap}>{label}</BigLabel>
		{caret && <Glyph name="smallCaret" />}
	</BigButton>
);

const Small = ({ icon, label, caret, active }) => (
	<Tool $start={Boolean(label)} $active={active} aria-label={label || icon}>
		<Glyph name={icon} />
		{label}
		{caret && <Glyph name="smallCaret" />}
	</Tool>
);

const RibbonPanel = ({ width, label, plain, launcher, children }) => (
	<Panel $width={width}>
		<PanelBody>{children}</PanelBody>
		<PanelLabel>
			{label}
			{!plain && <Glyph name="caret" />}
			{launcher && (
				<Launcher $far={launcher === "far"} aria-label={label}>
					<Glyph name="launcher" />
				</Launcher>
			)}
		</PanelLabel>
	</Panel>
);

const statusItems = [
	{ text: "模型", width: 22, bold: true },
	{ icon: "modelGrid", active: true },
	{ icon: "snap" },
	{ icon: "caret", width: 12 },
	{ icon: "ortho", width: 17, split: true },
	{ icon: "polar" },
	{ icon: "caret", width: 12 },
	{ icon: "iso", width: 15 },
	{ icon: "caret", width: 14 },
	{ icon: "track", split: true },
	{ icon: "osnap" },
	{ icon: "caret", width: 12 },
	{ icon: "lineWeight", split: true },
	{ icon: "annoVisible", active: true, width: 20 },
	{ icon: "annoAuto" },
	{ icon: "anno", width: 17 },
	{ text: "1:1", width: 17 },
	{ icon: "caret", width: 9 },
	{ icon: "gear", width: 20, split: true },
	{ icon: "caret", width: 8 },
	{ icon: "plus", width: 22 },
	{ icon: "isolate", width: 20 },
	{ icon: "hardware", width: 22, split: true },
	{ icon: "clean", width: 20, split: true },
	{ icon: "menu", width: 16 }
];

const App = () => (
	<Window>
		<GlobalStyle />
		<Header>
			<AppButton aria-label="AutoCAD">
				<Logo>A</Logo>
				<DarkGlyph name="smallCaret" />
			</AppButton>
			<TitleBar>
				<QuickAccess>
					{quickTools.map((name, i) => (
						<QuickButton key={i} $narrow={name === "smallCaret"} aria-label={name}>
							<Glyph name={name} />
						</QuickButton>
					))}
				</QuickAccess>
				<Title>{"Autodesk AutoCAD 2019     Drawing4.dwg"}</Title>
				<Expand>▸</Expand>
				<Search aria-label="搜索" placeholder="键入关键字或短语" />
				<Account>
					<AccountButton aria-label="搜索"><Glyph name="binoculars" /></AccountButton>
					<AccountButton><Glyph name="user" />登录</AccountButton>
					<Spacer />
					<AccountButton $narrow aria-label="登录选项"><Glyph name="smallCaret" /></AccountButton>
					<AccountButton aria-label="商店"><Glyph name="cart" /></AccountButton>
					<AccountButton aria-label="应用"><Glyph name="exchange" /><Glyph name="smallCaret" /></AccountButton>
					<HelpArea>
						<AccountButton aria-label="帮助"><Glyph name="help" /><Glyph name="smallCaret" /></AccountButton>
					</HelpArea>
				</Account>
				<WindowButtons>
					<WindowButton aria-label="最小化"><Glyph name="minimize" /></WindowButton>
					<WindowButton aria-label="还原"><Glyph name="restore" /></WindowButton>
					<WindowButton aria-label="关闭" $close><Glyph name="close" /></WindowButton>
				</WindowButtons>
			</TitleBar>
			<RibbonTabs>
				{tabs.map((tab, i) => (
					<RibbonTab key={tab} $active={i === 0}>{tab}</RibbonTab>
				))}
				<CameraButton aria-label="显示"><Glyph name="camera" /><Glyph name="smallCaret" /></CameraButton>
			</RibbonTabs>
		</Header>

		<Ribbon>
			<RibbonPanel width={154} label="绘图">
				<Big icon="line" label="直线" />
				<Big icon="polyline" label="多段线" />
				<Big icon="circle" label="圆" caret />
				<Big icon="arc" label="圆弧" caret />
				<Tools>
					<Small icon="polygon" caret />
					<Small icon="ellipse" caret />
					<Small icon="hatch" caret />
				</Tools>
			</RibbonPanel>
			<RibbonPanel width={142} label="修改">
				<Tools $cols={4} $inset>
					<Small icon="move" label="移动" />
					<Small icon="rotate" label="旋转" />
					<Small icon="trim" caret />
					<Small icon="erase" />
					<Small icon="copy" label="复制" />
					<Small icon="mirror" label="镜像" />
					<Small icon="fillet" caret />
					<Small icon="explode" />
					<Small icon="stretch" label="拉伸" />
					<Small icon="scale" label="缩放" />
					<Small icon="array" caret />
					<Small icon="offset" />
				</Tools>
			</RibbonPanel>
			<RibbonPanel width={92} label="注释">
				<Big letter="A" label="文字" caret />
				<Big icon="dimension" label="标注" />
				<Tools>
					<Small icon="dimLinear" caret />
					<Small icon="leader" caret />
					<Small icon="table" />
				</Tools>
			</RibbonPanel>
			<RibbonPanel width={183} label="图层">
				<Big icon="layerProps" label="图层特性" wrap />
				<Stack $gap={1}>
					<Combo>
						<Glyph name="bulb" />
						<Glyph name="sun" />
						<Glyph name="unlock" />
						<Glyph name="swatch" />
						<select aria-label="图层"><option>0</option></select>
						<Glyph name="caret" />
					</Combo>
					<LayerTools>
						{["layOff", "layIso", "layFreeze", "layLock", "layCurrent", "layOn", "layIso", "layThaw", "layUnlock", "layMatch"].map((name, i) => (
							<Small key={i} icon={name} />
						))}
					</LayerTools>
				</Stack>
			</RibbonPanel>
			<RibbonPanel width={60} label="块">
				<Big icon="insert" label="插入" />
				<Tools>
					<Small icon="blockNew" />
					<Small icon="blockEdit" />
					<Small icon="attribute" caret />
				</Tools>
			</RibbonPanel>
			<RibbonPanel width={146} label="特性" launcher="far">
				<Big icon="matchProps" label="特性匹配" wrap />
				<Stack $gap={2}>
					<PropertyRow>
						<Glyph name="wheel" />
						<ColorCombo>
							<Glyph name="swatch" />
							<select aria-label="颜色"><option>ByLayer</option></select>
							<Glyph name="caret" />
						</ColorCombo>
					</PropertyRow>
					<PropertyRow>
						<Glyph name="weights" />
						<Combo $tight>
							<Glyph name="thickRule" />
							<select aria-label="线宽"><option>ByLayer</option></select>
							<Glyph name="caret" />
						</Combo>
					</PropertyRow>
					<PropertyRow>
						<Glyph name="dashes" />
						<Combo $tight>
							<Glyph name="thinRule" />
							<select aria-label="线型"><option>ByLayer</option></select>
							<Glyph name="caret" />
						</Combo>
					</PropertyRow>
				</Stack>
			</RibbonPanel>
			<RibbonPanel width={50} label="组">
				<Big icon="group" label="组" />
				<Tools>
					<Small icon="ungroup" />
					<Small icon="groupEdit" />
					<Small icon="groupSelect" active />
				</Tools>
			</RibbonPanel>
			<RibbonPanel width={56} label="实用工具">
				<Big icon="measure" label="测量" caret />
				<Tools>
					<Small icon="quickSelect" />
					<Small icon="selectAll" />
					<Small icon="calculator" />
				</Tools>
			</RibbonPanel>
			<RibbonPanel width={55} label="剪贴板" plain>
				<Big icon="paste" label="粘贴" caret />
				<Tools>
					<Small icon="cut" />
					<Small icon="copyClip" />
				</Tools>
			</RibbonPanel>
			<RibbonPanel width={45} label="视图" launcher="near">
				<Spacer />
				<Big icon="base" label="基点" caret />
				<Spacer />
			</RibbonPanel>
		</Ribbon>

		<FileTabs>
			<FileTab>开始</FileTab>
			<FileTab $active>Drawing4*<Glyph name="close" opacity=".2" /></FileTab>
			<AddTab aria-label="新建图形">+</AddTab>
		</FileTabs>

		<Workspace>
			<Canvas>
				<ModelSpace />
				<ViewTools>
					<DocButtons>
						<button aria-label="最小化"><Glyph name="minimize" /></button>
						<button aria-label="还原"><Glyph name="restore" /></button>
						<button aria-label="关闭"><Glyph name="close" /></button>
					</DocButtons>
					<Compass>
						<Side $area="1 / 2">北</Side>
						<Side $area="2 / 1">西</Side>
						<Cube>上</Cube>
						<Side $area="2 / 3">东</Side>
						<Side $area="3 / 2">南</Side>
					</Compass>
					<Wcs>WCS</Wcs>
				</ViewTools>
				<NavBar>
					{["steering", "pan", "zoomAll", "orbit", "motion"].map(name => (
						<button key={name} aria-label={name}><Glyph name={name} /></button>
					))}
				</NavBar>
				<Console>
					<History>
						<Entry $dim>命令: X</Entry>
						<Entry>EXPLODE</Entry>
						<Entry>选择对象: 找到 1 个</Entry>
					</History>
					<CommandLine>
						<CommandTools>
							<Glyph name="grip" />
							<button aria-label="关闭"><Glyph name="close" /></button>
							<button aria-label="自定义"><Glyph name="wrench" /></button>
						</CommandTools>
						<Prompt htmlFor="command">
							<Glyph name="prompt" />
							<DarkGlyph name="smallCaret" />
							<b>EXPLODE</b> 选择对象:
						</Prompt>
						<CommandInput id="command" />
						<HistoryButton aria-label="历史记录"><Glyph name="up" /></HistoryButton>
					</CommandLine>
				</Console>
			</Canvas>
			<FrameEdge />
			<Badge>75</Badge>
		</Workspace>

		<Footer>
			<LayoutTabs>
				<LayoutTab $active>模型</LayoutTab>
				<LayoutTab>布局1</LayoutTab>
				<LayoutTab>布局2</LayoutTab>
				<AddTab $top aria-label="新建布局">+</AddTab>
			</LayoutTabs>
			<StatusBar>
				{statusItems.map(({ text, icon, width, bold, split, active }, i) => (
					<StatusButton key={i} $width={width} $bold={bold} $split={split} $active={active} aria-label={text || icon}>
						{text || <Glyph name={icon} />}
					</StatusButton>
				))}
			</StatusBar>
		</Footer>
		<Taskbar />
		<Watermark>
			<svg width="34" height="33" viewBox="0 0 34 33">
				<circle cx="15" cy="20" r="13" fill="#c4c4c4" fillOpacity=".9" />
				<path d="M3 8Q12-2 25 2v8q5 4 4 10-2 8-9 12 6-9 3-15-6-8-20-9z" fill="#1f93a5" />
				<path d="M5 8q9-4 18 1l3 7Q17 8 5 8z" fill="#4cc0cd" />
				<path d="M15 14v12M9 20h12" stroke="#fff" strokeWidth="1.500" />
			</svg>
			系统天地
		</Watermark>
	</Window>
);

export default App;
